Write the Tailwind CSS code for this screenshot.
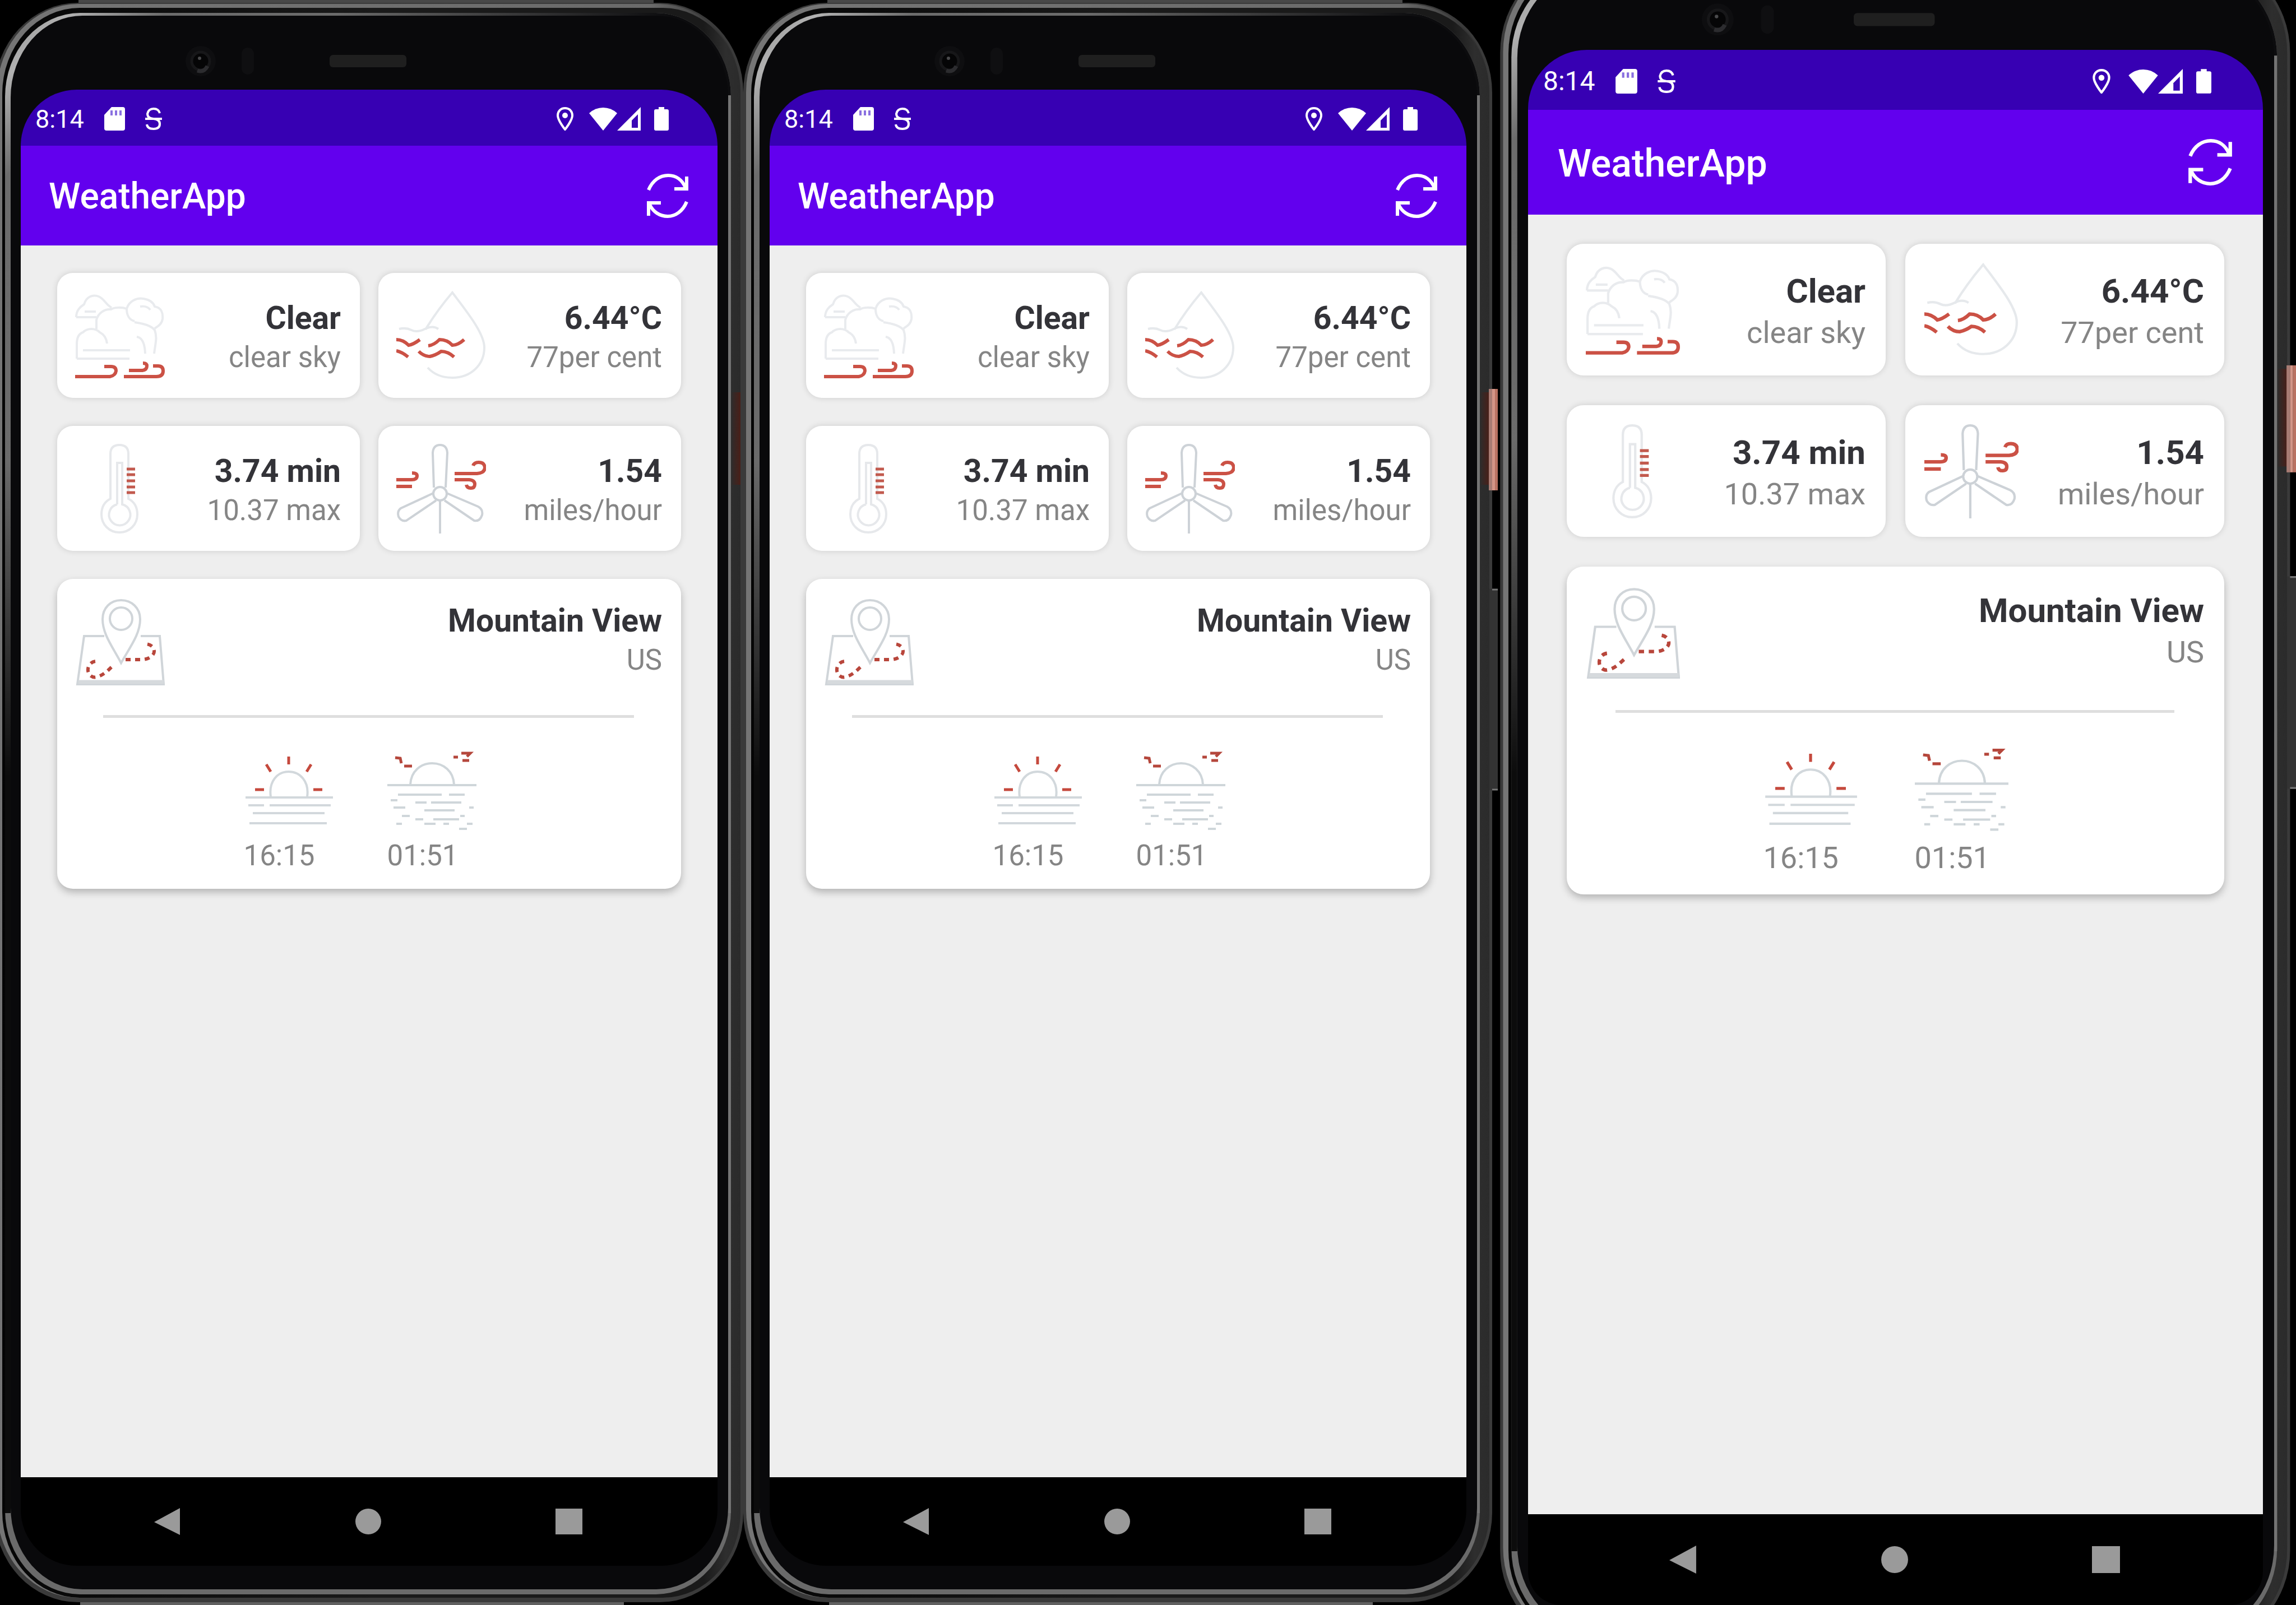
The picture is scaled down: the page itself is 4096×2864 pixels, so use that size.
<!DOCTYPE html>
<html lang="en">
<head>
<meta charset="utf-8">
<meta name="viewport" content="width=device-width, initial-scale=1">
<title>WeatherApp</title>
<script src="https://cdn.jsdelivr.net/npm/@tailwindcss/browser@4"></script>
</head>
<body class="bg-black font-[Roboto,'Liberation_Sans',sans-serif]">

<!-- Shared drawings -->
<svg class="absolute h-0 w-0" aria-hidden="true">
  <defs>
    <linearGradient id="rim" gradientUnits="userSpaceOnUse" x1="-5" y1="0" x2="1321" y2="0">
      <stop offset="0" stop-color="#757575"/><stop offset=".88" stop-color="#6a6a6a"/><stop offset=".97" stop-color="#333"/><stop offset="1" stop-color="#2c2c2c"/>
    </linearGradient>
    <linearGradient id="groove" gradientUnits="userSpaceOnUse" x1="4" y1="0" x2="1321" y2="0">
      <stop offset="0" stop-color="#050505"/><stop offset=".5" stop-color="#1a1a1a"/><stop offset=".95" stop-color="#1a1a1a"/><stop offset=".98" stop-color="#2e2e2e"/><stop offset="1" stop-color="#2b2b2b"/>
    </linearGradient>
    <linearGradient id="lip" gradientUnits="userSpaceOnUse" x1="9" y1="23" x2="500" y2="500">
      <stop offset="0" stop-color="#8a8a8a"/><stop offset=".12" stop-color="#b2b2b2"/><stop offset=".3" stop-color="#6c6c6c"/><stop offset="1" stop-color="#6a6a6a"/>
    </linearGradient>
    <linearGradient id="shade" gradientUnits="userSpaceOnUse" x1="600" y1="0" x2="1200" y2="0">
      <stop offset="0" stop-color="#0c0c0e" stop-opacity="0"/><stop offset="1" stop-color="#0c0c0e"/>
    </linearGradient>
    <linearGradient id="fade" x1="0" y1="0" x2="0" y2="1">
      <stop offset="0" stop-color="#0c0c0c" stop-opacity="0"/><stop offset=".3" stop-color="#0c0c0c"/><stop offset="1" stop-color="#0c0c0c"/>
    </linearGradient>
    <linearGradient id="tint" x1="0" y1="0" x2="1" y2="0">
      <stop offset="0" stop-color="#4a1f18" stop-opacity="0"/><stop offset="1" stop-color="#4a1f18"/>
    </linearGradient>
    <g id="frame">
      <rect x="140" y="0" width="1026" height="6" fill="#484848"/>
      <rect x="143" y="2858" width="970" height="6" fill="#606060"/>
      <rect x="-10" y="5" width="1336" height="2854" rx="149" ry="160" fill="#3a3a3a"/>
      <rect x="-5" y="7" width="1326" height="2844" rx="145" ry="157" fill="url(#rim)"/>
      <rect x="4" y="14" width="1317" height="2837" rx="138" ry="153" fill="url(#groove)"/>
      <rect x="9" y="23" width="1295" height="2822" rx="134" ry="150" fill="url(#lip)"/>
      <rect x="9" y="23" width="1295" height="1400" rx="134" ry="150" fill="url(#shade)"/>
      <rect x="1299" y="170" width="5" height="2530" fill="#747474"/>
      <rect x="9" y="820" width="10" height="1880" fill="url(#fade)"/>
      <rect x="19" y="28" width="1280" height="2808" rx="128" ry="146" fill="#09090b"/>
      <circle cx="358" cy="109" r="27" fill="#0e0e10"/>
      <circle cx="358" cy="109" r="16" fill="#050506" stroke="#171719" stroke-width="5"/>
      <circle cx="356" cy="104" r="3" fill="#4a4a4c"/>
      <path d="M352 126q12 4 18-8" fill="none" stroke="#2c2c2f" stroke-width="7"/>
      <rect x="431" y="85" width="22" height="48" rx="11" fill="#0f0f11"/>
      <rect x="588" y="98" width="137" height="22" rx="6" fill="#1f1f1f"/>
      <rect x="1304" y="700" width="17" height="165" fill="url(#tint)"/>
    </g>
    <g id="sidekeys">
      <rect x="1320" y="694" width="6" height="181" fill="#a87c74"/>
      <rect x="1326" y="694" width="5" height="181" fill="#d39587"/>
      <rect x="1331" y="694" width="5" height="181" fill="#b97262"/>
      <rect x="1321" y="1051" width="15" height="359" fill="#333"/>
      <path d="M1326 1052h10M1326 1409h10" stroke="#777" stroke-width="3"/>
    </g>
  </defs>
  <symbol id="sd" viewBox="0 0 37 42"><path d="M13 0H33q4 0 4 4V38q0 4-4 4H4q-4 0-4-4V14z" fill="#fff"/><path d="M13 6v9M21 6v9M29 6v9" stroke="#8a70e0" stroke-width="4"/></symbol>
  <symbol id="sbadge" viewBox="0 0 30 42"><path d="M26 11Q24 3 15 3T4 12q0 8 11 9t11 9q0 9-11 9T3 31M0 21h30" fill="none" stroke="#fff" stroke-width="4"/></symbol>
  <symbol id="loc" viewBox="0 0 30 42"><path d="M15 2C7 2 2 8 2 15c0 9 13 25 13 25s13-16 13-25C28 8 23 2 15 2z" fill="none" stroke="#fff" stroke-width="4"/><circle cx="15" cy="15" r="5" fill="#fff"/></symbol>
  <symbol id="wifi" viewBox="0 0 50 42"><path d="M25 42 0 11Q11 1 25 1t25 10z" fill="#fff"/></symbol>
  <symbol id="signal" viewBox="0 0 42 42"><path d="M42 0v42H0z" fill="#fff"/><path d="M37 13v24H26V24z" fill="#3a06b5"/></symbol>
  <symbol id="battery" viewBox="0 0 26 42"><path d="M8 0h10v4h5q3 0 3 3v32q0 3-3 3H3q-3 0-3-3V7q0-3 3-3h5z" fill="#fff"/></symbol>
  <symbol id="refresh" viewBox="0 0 74 79"><path d="M3 29C10 12 23 3 38 3c14 0 25 8 31 22M71 5v22H49M71 50C64 67 51 76 37 76 23 76 11 68 5 55M3 75V52h22" fill="none" stroke="#fff" stroke-width="6"/></symbol>
  <symbol id="clouds" viewBox="0 0 160 160">
    <g fill="none" stroke="#e9ebee" stroke-width="4">
      <path d="M2 47H38M2 47C2 34 10 28 16 24 20 10 32 6 42 10c10 4 12 14 23 20M17 37h20"/>
      <path d="M38 68V52c3-12 14-20 26-19 6-4 20-4 28-1C96 18 110 12 122 14c12 2 18 8 20 14 12 2 15 12 14 22-1 8-6 12-14 17M92 32c0 12 5 20 14 22M116 28c6-1 14 0 18 6M106 56c14 2 30 6 36 14 5 14 1 24-1 42"/>
      <path d="M3 121V95C3 82 8 76 14 74 22 66 36 66 44 74c8 4 12 12 13 20M14 106h84M3 121h94M110 82q14 2 15 30"/>
    </g>
    <g fill="none" stroke="#cb5145" stroke-width="6"><path d="M0 153H62q10-2 11-10 0-8-9-8H52"/><path d="M87 153h58q12 0 12-10 0-9-9-9h-9M96 142h24q8-1 8-8 0-5-7-5"/></g>
  </symbol>
  <symbol id="drop" viewBox="0 0 160 160">
    <path d="M52 69C66 46 82 24 100 3c24 32 57 72 57 98 0 32-25 54-57 54-19 0-34-7-44-18M5 68q12-3 22 2t24-2 24 0" fill="none" stroke="#e6e9ec" stroke-width="4"/>
    <g fill="none" stroke="#cb5145" stroke-width="6"><path d="M0 87q12 0 22 10 8-1 20-10M57 98q10-1 20-11 14 0 23 10 10 0 21-10M0 107q10 2 21 11M40 108q9 9 20 9 10-2 20-9 12 0 23 10"/></g>
  </symbol>
  <symbol id="thermo" viewBox="0 0 160 160">
    <g fill="none" stroke="#e6e8eb" stroke-width="4"><path d="M63 98V18q0-16 16-16t16 16v80c10 5 16 15 16 28 0 18-14 32-32 32s-32-14-32-32c0-13 6-23 16-28z"/><path d="M75 108V34h9v74a19 19 0 1 1-9 0"/></g>
    <path d="M92 45h15M92 55h15M92 66h15M92 77h15M92 87h15" stroke="#c25a4e" stroke-width="5"/>
  </symbol>
  <symbol id="mill" viewBox="0 0 160 160">
    <g fill="none" stroke="#cdd2d7" stroke-width="4"><path d="M67 78 65 16Q66 2 78 2t13 14L88 78M78 101v59"/><circle cx="78" cy="89" r="12"/><path d="M66 88 8 115q-7 5-4 15 5 9 14 7L71 101M90 88l56 24q9 5 7 15-4 12-14 10L86 101"/></g>
    <g fill="none" stroke="#cb5145" stroke-width="6"><path d="M0 64h27q10 0 10-7 0-5-9-5M0 76h28M104 53h40q14-1 14-11-1-9-11-9-8 0-10 6M104 64h26q10 1 10 8t-7 7q-7 0-8-6"/></g>
  </symbol>
  <symbol id="map" viewBox="0 0 160 160">
    <g fill="none" stroke="#d0d5d9" stroke-width="4"><path d="M52 70H16L4 156H158L151 70H117"/><path d="M82 118C66 88 49 66 49 40 49 20 63 6 82 6s34 14 34 34c0 26-17 48-34 78z"/><circle cx="82" cy="39" r="20"/></g>
    <path d="M6 152H158" stroke="#d6dadd" stroke-width="7"/>
    <path d="M36 115c-8 1-14 8-13 17 1 8 8 13 15 11 14-3 22-14 30-20M90 112h28c14 0 24-8 23-16-1-9-10-13-20-12" fill="none" stroke="#b8463b" stroke-width="6" stroke-dasharray="9 8"/>
  </symbol>
  <symbol id="sunrise" viewBox="0 0 160 160">
    <g fill="none" stroke="#d2d8dc" stroke-width="4"><path d="M48 90C44 62 60 45 80 45s37 17 33 45M3 91H159M8 105H36M46 105H155M16 119H144M10 137H148"/></g>
    <path d="M80 18v14M40 32l8 13M120 32l-8 13M20 77h16M124 77h16" stroke="#c5493d" stroke-width="5"/>
  </symbol>
  <symbol id="sunset" viewBox="0 0 160 160">
    <g fill="none" stroke="#cfd6da" stroke-width="4"><path d="M41 68C42 44 60 30 80 30s38 14 39 38M0 69H159"/><path d="M19 86H97M110 86H138M6 96h12M50 100h20M78 100h54M11 109H32M146 109h8M66 114h54M26 124h14M130 124h8M50 130h14M82 130h46M16 138h10M66 138h20M100 138h10M142 138h10M128 147h14"/></g>
    <path d="M14 20l9 1 2 9M30 35h14M118 19h8M132 12h16l-6 6M134 25h12" fill="none" stroke="#b5473c" stroke-width="5"/>
  </symbol>
  <symbol id="back" viewBox="0 0 48 48"><path d="M46 0v48L0 25z" fill="#9a9a9a"/></symbol>
  <symbol id="home" viewBox="0 0 48 48"><circle cx="24" cy="24" r="23" fill="#9a9a9a"/></symbol>
  <symbol id="recent" viewBox="0 0 48 48"><path d="M0 1h48v46H0z" fill="#9a9a9a"/></symbol>
</svg>

<main class="grid h-screen grid-cols-[1326fr_1346fr_1424fr] overflow-hidden">

  <!-- First phone -->
  <section class="relative flex min-w-0 flex-col overflow-hidden pt-[160px] pr-[46px] pb-[70px] pl-[37px]">
    <svg class="absolute inset-0 h-full w-full" viewBox="0 0 1326 2864" preserveAspectRatio="none" aria-hidden="true"><use href="#frame"/></svg>
    <div class="relative flex min-h-0 flex-1 flex-col overflow-hidden rounded-t-[100px]">
      <div class="flex h-[100px] items-center bg-[#3700b3] pt-1 pr-[87px] pl-[26px] text-white">
        <span class="text-[45px] leading-none">8:14</span>
        <svg class="ml-9 h-[42px] w-[37px]" aria-hidden="true"><use href="#sd"/></svg>
        <svg class="ml-9 h-[42px] w-[30px]" aria-hidden="true"><use href="#sbadge"/></svg>
        <svg class="ml-auto h-[42px] w-[30px]" aria-hidden="true"><use href="#loc"/></svg>
        <svg class="ml-7 h-[42px] w-[50px]" aria-hidden="true"><use href="#wifi"/></svg>
        <svg class="h-[42px] w-[42px]" aria-hidden="true"><use href="#signal"/></svg>
        <svg class="ml-6 h-[42px] w-[26px]" aria-hidden="true"><use href="#battery"/></svg>
      </div>
      <header class="flex h-[178px] items-center justify-between bg-[#6200ee] pr-[52px] pl-[50px] text-white">
        <h1 class="pt-1 text-[64px] leading-none font-medium">WeatherApp</h1>
        <button type="button" aria-label="Refresh"><svg class="h-[79px] w-[74px]"><use href="#refresh"/></svg></button>
      </header>
      <div class="flex min-h-0 flex-1 flex-col gap-[50px] bg-[#eeeeee] px-[65px] pt-[49px]">
        <div class="grid grid-cols-2 gap-x-[33px] gap-y-[50px]">
          <article class="flex h-[223px] items-center justify-between rounded-[28px] bg-white pr-[34px] pl-8 shadow-[0_0_12px_rgba(0,0,0,0.14)]">
            <svg class="h-[160px] w-[160px] shrink-0" aria-hidden="true"><use href="#clouds"/></svg>
            <div class="pt-2 text-right"><h2 class="text-[57px] leading-[70px] font-bold text-[#333338]">Clear</h2><p class="text-[51px] leading-[70px] text-[#858585]">clear sky</p></div>
          </article>
          <article class="flex h-[223px] items-center justify-between rounded-[28px] bg-white pr-[34px] pl-8 shadow-[0_0_12px_rgba(0,0,0,0.14)]">
            <svg class="h-[160px] w-[160px] shrink-0" aria-hidden="true"><use href="#drop"/></svg>
            <div class="pt-2 text-right"><h2 class="text-[57px] leading-[70px] font-bold text-[#333338]">6.44°C</h2><p class="text-[51px] leading-[70px] text-[#858585]">77per cent</p></div>
          </article>
          <article class="flex h-[223px] items-center justify-between rounded-[28px] bg-white pr-[34px] pl-8 shadow-[0_0_12px_rgba(0,0,0,0.14)]">
            <svg class="h-[160px] w-[160px] shrink-0" aria-hidden="true"><use href="#thermo"/></svg>
            <div class="pt-2 text-right"><h2 class="text-[57px] leading-[70px] font-bold text-[#333338]">3.74 min</h2><p class="text-[51px] leading-[70px] text-[#858585]">10.37 max</p></div>
          </article>
          <article class="flex h-[223px] items-center justify-between rounded-[28px] bg-white pr-[34px] pl-8 shadow-[0_0_12px_rgba(0,0,0,0.14)]">
            <svg class="h-[160px] w-[160px] shrink-0" aria-hidden="true"><use href="#mill"/></svg>
            <div class="pt-2 text-right"><h2 class="text-[57px] leading-[70px] font-bold text-[#333338]">1.54</h2><p class="text-[51px] leading-[70px] text-[#858585]">miles/hour</p></div>
          </article>
        </div>
        <article class="rounded-[28px] bg-white pt-8 pr-[34px] pb-6 pl-8 shadow-[0_6px_14px_rgba(0,0,0,0.25)]">
          <div class="flex items-start justify-between">
            <svg class="h-[160px] w-[160px]" aria-hidden="true"><use href="#map"/></svg>
            <div class="pt-2 text-right"><h2 class="text-[57px] leading-[70px] font-bold text-[#333338]">Mountain View</h2><p class="text-[51px] leading-[70px] text-[#858585]">US</p></div>
          </div>
          <hr class="mx-[50px] my-[51px] h-[5px] border-0 bg-[#dedede]">
          <div class="flex justify-center gap-24 pr-[30px] text-[51px] leading-[70px] text-[#858585]">
            <div><svg class="h-[160px] w-[160px]" aria-hidden="true"><use href="#sunrise"/></svg><p>16:15</p></div>
            <div><svg class="h-[160px] w-[160px]" aria-hidden="true"><use href="#sunset"/></svg><p>01:51</p></div>
          </div>
        </article>
      </div>
      <nav class="flex h-[158px] items-center justify-center gap-[310px] rounded-b-[100px] bg-black pr-1">
        <button type="button" aria-label="Back"><svg class="h-12 w-12"><use href="#back"/></svg></button>
        <button type="button" aria-label="Home"><svg class="h-12 w-12"><use href="#home"/></svg></button>
        <button type="button" aria-label="Recent apps"><svg class="h-12 w-12"><use href="#recent"/></svg></button>
      </nav>
    </div>
  </section>

  <!-- Second phone -->
  <section class="relative flex min-w-0 flex-col overflow-hidden pt-[160px] pr-[56px] pb-[70px] pl-[47px]">
    <svg class="absolute inset-0 h-full w-full" viewBox="-10 0 1346 2864" preserveAspectRatio="none" aria-hidden="true"><use href="#frame"/><use href="#sidekeys"/></svg>
    <div class="relative flex min-h-0 flex-1 flex-col overflow-hidden rounded-t-[100px]">
      <div class="flex h-[100px] items-center bg-[#3700b3] pt-1 pr-[87px] pl-[26px] text-white">
        <span class="text-[45px] leading-none">8:14</span>
        <svg class="ml-9 h-[42px] w-[37px]" aria-hidden="true"><use href="#sd"/></svg>
        <svg class="ml-9 h-[42px] w-[30px]" aria-hidden="true"><use href="#sbadge"/></svg>
        <svg class="ml-auto h-[42px] w-[30px]" aria-hidden="true"><use href="#loc"/></svg>
        <svg class="ml-7 h-[42px] w-[50px]" aria-hidden="true"><use href="#wifi"/></svg>
        <svg class="h-[42px] w-[42px]" aria-hidden="true"><use href="#signal"/></svg>
        <svg class="ml-6 h-[42px] w-[26px]" aria-hidden="true"><use href="#battery"/></svg>
      </div>
      <header class="flex h-[178px] items-center justify-between bg-[#6200ee] pr-[52px] pl-[50px] text-white">
        <h1 class="pt-1 text-[64px] leading-none font-medium">WeatherApp</h1>
        <button type="button" aria-label="Refresh"><svg class="h-[79px] w-[74px]"><use href="#refresh"/></svg></button>
      </header>
      <div class="flex min-h-0 flex-1 flex-col gap-[50px] bg-[#eeeeee] px-[65px] pt-[49px]">
        <div class="grid grid-cols-2 gap-x-[33px] gap-y-[50px]">
          <article class="flex h-[223px] items-center justify-between rounded-[28px] bg-white pr-[34px] pl-8 shadow-[0_0_12px_rgba(0,0,0,0.14)]">
            <svg class="h-[160px] w-[160px] shrink-0" aria-hidden="true"><use href="#clouds"/></svg>
            <div class="pt-2 text-right"><h2 class="text-[57px] leading-[70px] font-bold text-[#333338]">Clear</h2><p class="text-[51px] leading-[70px] text-[#858585]">clear sky</p></div>
          </article>
          <article class="flex h-[223px] items-center justify-between rounded-[28px] bg-white pr-[34px] pl-8 shadow-[0_0_12px_rgba(0,0,0,0.14)]">
            <svg class="h-[160px] w-[160px] shrink-0" aria-hidden="true"><use href="#drop"/></svg>
            <div class="pt-2 text-right"><h2 class="text-[57px] leading-[70px] font-bold text-[#333338]">6.44°C</h2><p class="text-[51px] leading-[70px] text-[#858585]">77per cent</p></div>
          </article>
          <article class="flex h-[223px] items-center justify-between rounded-[28px] bg-white pr-[34px] pl-8 shadow-[0_0_12px_rgba(0,0,0,0.14)]">
            <svg class="h-[160px] w-[160px] shrink-0" aria-hidden="true"><use href="#thermo"/></svg>
            <div class="pt-2 text-right"><h2 class="text-[57px] leading-[70px] font-bold text-[#333338]">3.74 min</h2><p class="text-[51px] leading-[70px] text-[#858585]">10.37 max</p></div>
          </article>
          <article class="flex h-[223px] items-center justify-between rounded-[28px] bg-white pr-[34px] pl-8 shadow-[0_0_12px_rgba(0,0,0,0.14)]">
            <svg class="h-[160px] w-[160px] shrink-0" aria-hidden="true"><use href="#mill"/></svg>
            <div class="pt-2 text-right"><h2 class="text-[57px] leading-[70px] font-bold text-[#333338]">1.54</h2><p class="text-[51px] leading-[70px] text-[#858585]">miles/hour</p></div>
          </article>
        </div>
        <article class="rounded-[28px] bg-white pt-8 pr-[34px] pb-6 pl-8 shadow-[0_6px_14px_rgba(0,0,0,0.25)]">
          <div class="flex items-start justify-between">
            <svg class="h-[160px] w-[160px]" aria-hidden="true"><use href="#map"/></svg>
            <div class="pt-2 text-right"><h2 class="text-[57px] leading-[70px] font-bold text-[#333338]">Mountain View</h2><p class="text-[51px] leading-[70px] text-[#858585]">US</p></div>
          </div>
          <hr class="mx-[50px] my-[51px] h-[5px] border-0 bg-[#dedede]">
          <div class="flex justify-center gap-24 pr-[30px] text-[51px] leading-[70px] text-[#858585]">
            <div><svg class="h-[160px] w-[160px]" aria-hidden="true"><use href="#sunrise"/></svg><p>16:15</p></div>
            <div><svg class="h-[160px] w-[160px]" aria-hidden="true"><use href="#sunset"/></svg><p>01:51</p></div>
          </div>
        </article>
      </div>
      <nav class="flex h-[158px] items-center justify-center gap-[310px] rounded-b-[100px] bg-black pr-1">
        <button type="button" aria-label="Back"><svg class="h-12 w-12"><use href="#back"/></svg></button>
        <button type="button" aria-label="Home"><svg class="h-12 w-12"><use href="#home"/></svg></button>
        <button type="button" aria-label="Recent apps"><svg class="h-12 w-12"><use href="#recent"/></svg></button>
      </nav>
    </div>
  </section>

  <!-- Third phone, slightly larger and cropped at top and bottom -->
  <section class="relative flex min-w-0 flex-col overflow-hidden pt-[89px] pr-[59px] pl-[54px]">
    <svg class="absolute inset-0 h-full w-full" viewBox="-14 76 1350 2715" preserveAspectRatio="none" aria-hidden="true"><use href="#frame"/><use href="#sidekeys"/></svg>
    <div class="relative flex min-h-0 flex-1 flex-col overflow-hidden rounded-t-[105px]">
      <div class="flex h-[107px] items-center bg-[#3700b3] pt-1 pr-[92px] pl-[27px] text-white">
        <span class="text-[48px] leading-none">8:14</span>
        <svg class="ml-9 h-[44px] w-[39px]" aria-hidden="true"><use href="#sd"/></svg>
        <svg class="ml-9 h-[44px] w-[32px]" aria-hidden="true"><use href="#sbadge"/></svg>
        <svg class="ml-auto h-[44px] w-[32px]" aria-hidden="true"><use href="#loc"/></svg>
        <svg class="ml-8 h-[44px] w-[53px]" aria-hidden="true"><use href="#wifi"/></svg>
        <svg class="h-[44px] w-[44px]" aria-hidden="true"><use href="#signal"/></svg>
        <svg class="ml-6 h-[44px] w-[27px]" aria-hidden="true"><use href="#battery"/></svg>
      </div>
      <header class="flex h-[187px] items-center justify-between bg-[#6200ee] pr-[55px] pl-[53px] text-white">
        <h1 class="pt-1 text-[68px] leading-none font-medium">WeatherApp</h1>
        <button type="button" aria-label="Refresh"><svg class="h-[83px] w-[78px]"><use href="#refresh"/></svg></button>
      </header>
      <div class="flex min-h-0 flex-1 flex-col gap-[53px] bg-[#eeeeee] px-[69px] pt-[52px]">
        <div class="grid grid-cols-2 gap-x-[35px] gap-y-[53px]">
          <article class="flex h-[235px] items-center justify-between rounded-[30px] bg-white pr-[36px] pl-[34px] shadow-[0_0_12px_rgba(0,0,0,0.14)]">
            <svg class="h-[168px] w-[168px] shrink-0" aria-hidden="true"><use href="#clouds"/></svg>
            <div class="pt-2 text-right"><h2 class="text-[60px] leading-[74px] font-bold text-[#333338]">Clear</h2><p class="text-[54px] leading-[74px] text-[#858585]">clear sky</p></div>
          </article>
          <article class="flex h-[235px] items-center justify-between rounded-[30px] bg-white pr-[36px] pl-[34px] shadow-[0_0_12px_rgba(0,0,0,0.14)]">
            <svg class="h-[168px] w-[168px] shrink-0" aria-hidden="true"><use href="#drop"/></svg>
            <div class="pt-2 text-right"><h2 class="text-[60px] leading-[74px] font-bold text-[#333338]">6.44°C</h2><p class="text-[54px] leading-[74px] text-[#858585]">77per cent</p></div>
          </article>
          <article class="flex h-[235px] items-center justify-between rounded-[30px] bg-white pr-[36px] pl-[34px] shadow-[0_0_12px_rgba(0,0,0,0.14)]">
            <svg class="h-[168px] w-[168px] shrink-0" aria-hidden="true"><use href="#thermo"/></svg>
            <div class="pt-2 text-right"><h2 class="text-[60px] leading-[74px] font-bold text-[#333338]">3.74 min</h2><p class="text-[54px] leading-[74px] text-[#858585]">10.37 max</p></div>
          </article>
          <article class="flex h-[235px] items-center justify-between rounded-[30px] bg-white pr-[36px] pl-[34px] shadow-[0_0_12px_rgba(0,0,0,0.14)]">
            <svg class="h-[168px] w-[168px] shrink-0" aria-hidden="true"><use href="#mill"/></svg>
            <div class="pt-2 text-right"><h2 class="text-[60px] leading-[74px] font-bold text-[#333338]">1.54</h2><p class="text-[54px] leading-[74px] text-[#858585]">miles/hour</p></div>
          </article>
        </div>
        <article class="rounded-[30px] bg-white pt-[34px] pr-[36px] pb-7 pl-[34px] shadow-[0_6px_14px_rgba(0,0,0,0.25)]">
          <div class="flex items-start justify-between">
            <svg class="h-[168px] w-[168px]" aria-hidden="true"><use href="#map"/></svg>
            <div class="pt-2 text-right"><h2 class="text-[60px] leading-[74px] font-bold text-[#333338]">Mountain View</h2><p class="text-[54px] leading-[74px] text-[#858585]">US</p></div>
          </div>
          <hr class="mx-[53px] my-[54px] h-[5px] border-0 bg-[#dedede]">
          <div class="flex justify-center gap-[102px] pr-8 text-[54px] leading-[74px] text-[#858585]">
            <div><svg class="h-[168px] w-[168px]" aria-hidden="true"><use href="#sunrise"/></svg><p>16:15</p></div>
            <div><svg class="h-[168px] w-[168px]" aria-hidden="true"><use href="#sunset"/></svg><p>01:51</p></div>
          </div>
        </article>
      </div>
      <nav class="flex h-[162px] items-center justify-center gap-[327px] rounded-b-[60px] bg-black pr-1">
        <button type="button" aria-label="Back"><svg class="h-[50px] w-[50px]"><use href="#back"/></svg></button>
        <button type="button" aria-label="Home"><svg class="h-[50px] w-[50px]"><use href="#home"/></svg></button>
        <button type="button" aria-label="Recent apps"><svg class="h-[50px] w-[50px]"><use href="#recent"/></svg></button>
      </nav>
    </div>
  </section>
</main>
</body>
</html>
